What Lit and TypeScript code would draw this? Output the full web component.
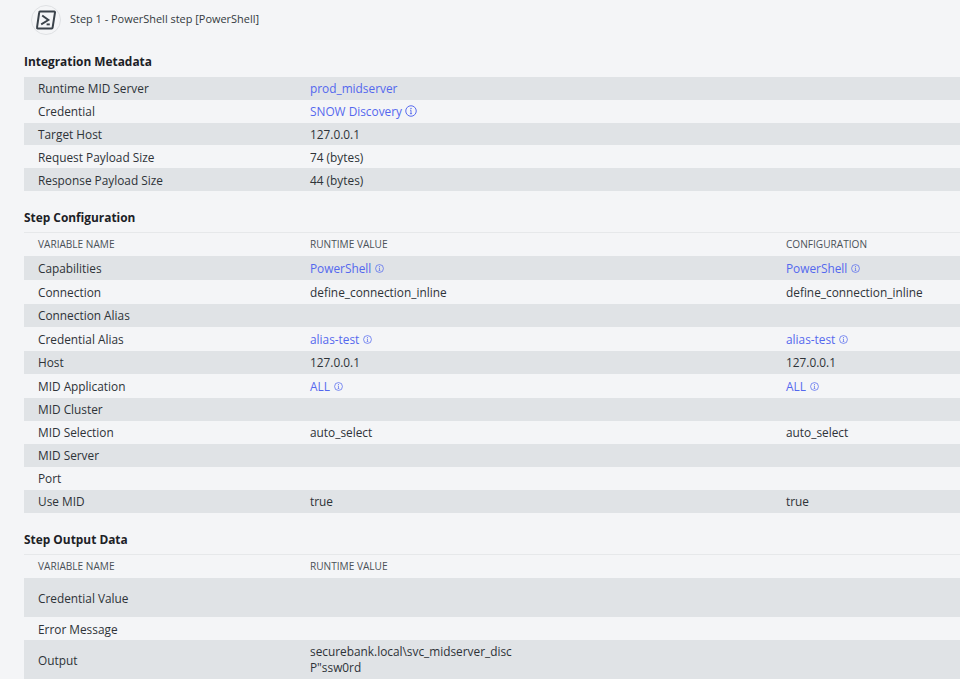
import { LitElement, html, css, nothing } from "lit";
import { customElement } from "lit/decorators.js";

type Cell = string | { link: string; info?: "big" | "small" };
interface Row { cells: Cell[]; cls?: string }

const info = (size: string) => html`<svg class="info ${size}" viewBox="0 0 16 16" fill="none" stroke="currentColor" stroke-width="1.3">
  <circle cx="8" cy="8" r="7"></circle><path d="M8 7v4.6M6.6 11.6h2.8M6.8 7h1.2" stroke-width="1.2"></path><circle cx="8" cy="4.6" r=".9" fill="currentColor" stroke="none"></circle></svg>`;

const meta: Row[] = [
  { cells: ["Runtime MID Server", { link: "prod_midserver" }] },
  { cells: ["Credential", { link: "SNOW Discovery", info: "big" }] },
  { cells: ["Target Host", "127.0.0.1"] },
  { cells: ["Request Payload Size", "74 (bytes)"] },
  { cells: ["Response Payload Size", "44 (bytes)"] },
];
const both = (n: string, c: Cell): Row => ({ cells: [n, c, c] });
const config: Row[] = [
  { ...both("Capabilities", { link: "PowerShell", info: "small" }), cls: "tall" },
  { ...both("Connection", "define_connection_inline"), cls: "tall" },
  both("Connection Alias", ""),
  { ...both("Credential Alias", { link: "alias-test", info: "small" }), cls: "tall" },
  both("Host", "127.0.0.1"),
  { ...both("MID Application", { link: "ALL", info: "small" }), cls: "tall" },
  both("MID Cluster", ""),
  both("MID Selection", "auto_select"),
  both("MID Server", ""),
  both("Port", ""),
  both("Use MID", "true"),
];

@customElement("app-root")
export class AppRoot extends LitElement {
  static styles = css`
    :host { display: block; height: 679px; overflow: hidden; background: #f4f5f7; color: #2e3338;
      font-family: "Open Sans", sans-serif; font-size: 11.85px; line-height: 16px; }
    .page { padding: 5px 0 0 24px; }
    .step { display: flex; align-items: center; gap: 9px; margin-left: 7px; height: 30px; font-size: 10.95px; color: #333a40; }
    .step span { margin-bottom: 2px; }
    .badge { width: 30px; height: 30px; box-sizing: border-box; border: 1px solid #dfe1e4; border-radius: 50%;
      display: flex; align-items: center; justify-content: center; }
    .badge svg { width: 20px; height: 20px; }
    h2 { margin: 0; font-size: 11.9px; line-height: 16px; font-weight: 700; color: #1c2126; }
    .title-meta { padding-top: 18px; height: 42px; box-sizing: border-box; }
    .title-next { height: 42px; padding-top: 18px; box-sizing: border-box; }
    .rule { border-bottom: 1px solid #e6e8ea; }
    .row { display: grid; grid-template-columns: 272px 476px 1fr; padding-left: 14px; align-items: center; min-height: 23px; }
    .meta .row { min-height: 22.8px; }
    .meta .row:nth-child(odd), .striped .row:nth-child(even) { background: #e0e3e6; }
    .row.tall { min-height: 24px; }
    .row.head { font-size: 10.1px; color: #4a5157; }
    .row.cv { min-height: 39px; }
    .row.cv > div, .row.err > div { padding-top: 2px; }
    .row.out { min-height: 40px; }
    .row.out > .value { margin-bottom: 2px; }
    .link { color: #5468ee; display: inline-flex; align-items: center; gap: 3px; }
    .info { flex: none; }
    .info.big { width: 12px; height: 12px; }
    .info.small { width: 9px; height: 9px; margin-top: 1px; margin-left: 1px; }
  `;

  private cell(c: Cell) {
    if (typeof c === "string") return html`<div>${c}</div>`;
    return html`<div><span class="link">${c.link}${c.info ? info(c.info) : nothing}</span></div>`;
  }

  private row(r: Row) {
    return html`<div class="row ${r.cls ?? ""}">${r.cells.map((c) => this.cell(c))}</div>`;
  }

  render() {
    return html`<div class="page">
      <div class="step">
        <div class="badge">
          <svg viewBox="0 0 20 20" fill="none" stroke="#3a424a">
            <path d="M3.4 1.6H18.4a.6.6 0 0 1 .6.7L16.6 17.6a.9.9 0 0 1-.9.8H1.6a.6.6 0 0 1-.6-.7L3.2 2.4a.9.9 0 0 1 .9-.8z" stroke-width="2"></path>
            <path d="M6.2 5.4l6.2 4.6-7.2 4.4" stroke-width="1.9"></path>
            <path d="M10.6 14.4h3.2" stroke-width="1.9"></path>
          </svg>
        </div>
        <span>Step 1 - PowerShell step [PowerShell]</span>
      </div>

      <h2 class="title-meta">Integration Metadata</h2>
      <div class="meta">${meta.map((r) => this.row(r))}</div>

      <h2 class="title-next rule">Step Configuration</h2>
      <div class="striped">
        <div class="row head"><div>VARIABLE NAME</div><div>RUNTIME VALUE</div><div>CONFIGURATION</div></div>
        ${config.map((r) => this.row(r))}
      </div>

      <h2 class="title-next rule">Step Output Data</h2>
      <div class="striped">
        <div class="row head"><div>VARIABLE NAME</div><div>RUNTIME VALUE</div><div></div></div>
        <div class="row cv"><div>Credential Value</div><div></div><div></div></div>
        <div class="row err"><div>Error Message</div><div></div><div></div></div>
        <div class="row out"><div>Output</div><div class="value">securebank.local\\svc_midserver_disc<br />P"ssw0rd</div><div></div></div>
      </div>
    </div>`;
  }
}
